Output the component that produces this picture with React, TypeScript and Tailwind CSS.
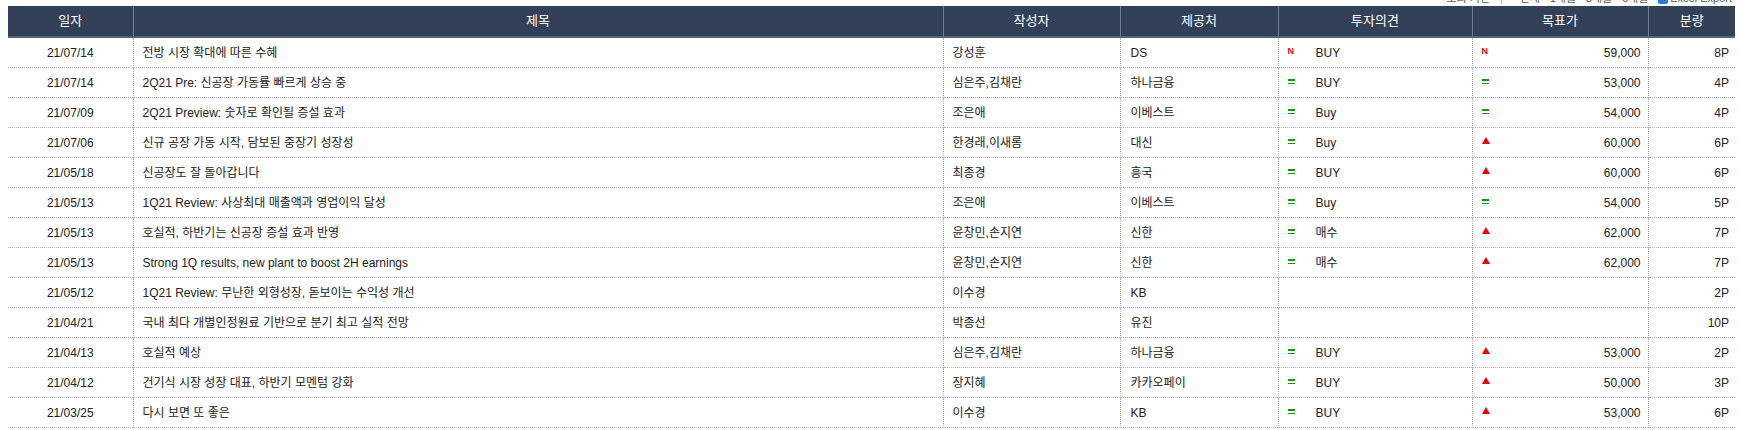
import * as React from "react";

type Mark = "N" | "=" | "up" | null;

interface Report {
  date: string;
  title: string;
  author: string;
  firm: string;
  opinionMark: Mark;
  opinion: string;
  priceMark: Mark;
  price: string;
  pages: string;
}

const reports: Report[] = [
  { date: "21/07/14", title: "전방 시장 확대에 따른 수혜", author: "강성훈", firm: "DS", opinionMark: "N", opinion: "BUY", priceMark: "N", price: "59,000", pages: "8P" },
  { date: "21/07/14", title: "2Q21 Pre: 신공장 가동률 빠르게 상승 중", author: "심은주,김채란", firm: "하나금융", opinionMark: "=", opinion: "BUY", priceMark: "=", price: "53,000", pages: "4P" },
  { date: "21/07/09", title: "2Q21 Preview: 숫자로 확인될 증설 효과", author: "조은애", firm: "이베스트", opinionMark: "=", opinion: "Buy", priceMark: "=", price: "54,000", pages: "4P" },
  { date: "21/07/06", title: "신규 공장 가동 시작, 담보된 중장기 성장성", author: "한경래,이새롬", firm: "대신", opinionMark: "=", opinion: "Buy", priceMark: "up", price: "60,000", pages: "6P" },
  { date: "21/05/18", title: "신공장도 잘 돌아갑니다", author: "최종경", firm: "흥국", opinionMark: "=", opinion: "BUY", priceMark: "up", price: "60,000", pages: "6P" },
  { date: "21/05/13", title: "1Q21 Review: 사상최대 매출액과 영업이익 달성", author: "조은애", firm: "이베스트", opinionMark: "=", opinion: "Buy", priceMark: "=", price: "54,000", pages: "5P" },
  { date: "21/05/13", title: "호실적, 하반기는 신공장 증설 효과 반영", author: "윤창민,손지연", firm: "신한", opinionMark: "=", opinion: "매수", priceMark: "up", price: "62,000", pages: "7P" },
  { date: "21/05/13", title: "Strong 1Q results, new plant to boost 2H earnings", author: "윤창민,손지연", firm: "신한", opinionMark: "=", opinion: "매수", priceMark: "up", price: "62,000", pages: "7P" },
  { date: "21/05/12", title: "1Q21 Review: 무난한 외형성장, 돋보이는 수익성 개선", author: "이수경", firm: "KB", opinionMark: null, opinion: "", priceMark: null, price: "", pages: "2P" },
  { date: "21/04/21", title: "국내 최다 개별인정원료 기반으로 분기 최고 실적 전망", author: "박종선", firm: "유진", opinionMark: null, opinion: "", priceMark: null, price: "", pages: "10P" },
  { date: "21/04/13", title: "호실적 예상", author: "심은주,김채란", firm: "하나금융", opinionMark: "=", opinion: "BUY", priceMark: "up", price: "53,000", pages: "2P" },
  { date: "21/04/12", title: "건기식 시장 성장 대표, 하반기 모멘텀 강화", author: "장지혜", firm: "카카오페이", opinionMark: "=", opinion: "BUY", priceMark: "up", price: "50,000", pages: "3P" },
  { date: "21/03/25", title: "다시 보면 또 좋은", author: "이수경", firm: "KB", opinionMark: "=", opinion: "BUY", priceMark: "up", price: "53,000", pages: "6P" },
];

const columns = [
  { label: "일자", w: "w-[125px]" },
  { label: "제목", w: "w-[810px]" },
  { label: "작성자", w: "w-[177px]" },
  { label: "제공처", w: "w-[158px]" },
  { label: "투자의견", w: "w-[194px]" },
  { label: "목표가", w: "w-[176px]" },
  { label: "분량", w: "w-[87px]" },
];

// small change markers: new / unchanged / raised
function MarkIcon({ mark }: { mark: Mark }) {
  if (mark === "N") {
    return (
      <span className="block w-[8px] text-[9px] leading-[9px] font-black text-[#ff0000] [font-family:'Liberation_Sans',Arial,sans-serif]">
        N
      </span>
    );
  }
  if (mark === "=") {
    return (
      <span className="flex w-[8px] flex-col gap-[2px] pt-[2px]">
        <span className="block h-[1.5px] w-[7px] bg-[#119911]" />
        <span className="block h-[1.5px] w-[7px] bg-[#119911]" />
      </span>
    );
  }
  if (mark === "up") {
    return (
      <svg width="8" height="7" viewBox="0 0 8 7" className="block">
        <polygon points="4,0 8,7 0,7" fill="#ee0000" />
      </svg>
    );
  }
  return null;
}

export default function App() {
  return (
    <div className="w-[1740px] h-[430px] overflow-hidden bg-white text-[12px] text-[#222] [font-family:'Liberation_Sans','Noto_Sans_CJK_KR',sans-serif]">
      {/* clipped toolbar above the table */}
      <div className="h-[6px] overflow-hidden flex justify-end pr-[8px]">
        <div className="-mt-[9px] flex items-center gap-[10px] text-[11px] text-[#555]">
          <span>―</span>
          <span>조회 기간</span>
          <span className="text-[#aaa]">|</span>
          <span>· 전체 · 1개월 · 3개월 · 6개월</span>
          <span className="flex items-center gap-[2px]">
            <span className="block w-[10px] h-[10px] rounded-[2px] bg-[#2b7bd6]" />
            <span>Excel Export</span>
          </span>
        </div>
      </div>

      <table className="ml-[8px] w-[1727px] table-fixed border-collapse">
        <colgroup>
          {columns.map((c) => (
            <col key={c.label} className={c.w} />
          ))}
        </colgroup>
        <thead>
          <tr className="h-[31px] bg-[#334158] border-b-2 border-[#56647b]">
            {columns.map((c, i) => (
              <th
                key={c.label}
                className={`p-0 text-center text-[13px] font-normal text-white ${
                  i > 0 ? "border-l border-[#737d8f]" : ""
                }`}
              >
                {c.label}
              </th>
            ))}
          </tr>
        </thead>
        <tbody>
          {reports.map((r, idx) => (
            <tr key={idx} className="h-[30px] border-b border-dotted border-[#b4b4b4]">
              <td className="p-0 text-center">{r.date}</td>
              <td className="border-l border-dotted border-[#b4b4b4] pl-[9px] truncate">{r.title}</td>
              <td className="border-l border-dotted border-[#b4b4b4] pl-[9px]">{r.author}</td>
              <td className="border-l border-dotted border-[#b4b4b4] pl-[10px]">{r.firm}</td>
              <td className="border-l border-dotted border-[#b4b4b4] p-0">
                <div className="relative h-[29px] flex items-center pl-[37px]">
                  <span className="absolute left-[9px] top-[9px]">
                    <MarkIcon mark={r.opinionMark} />
                  </span>
                  {r.opinion}
                </div>
              </td>
              <td className="border-l border-dotted border-[#b4b4b4] p-0">
                <div className="relative h-[29px] flex items-center justify-end pr-[7px]">
                  <span className="absolute left-[9px] top-[9px]">
                    <MarkIcon mark={r.priceMark} />
                  </span>
                  {r.price}
                </div>
              </td>
              <td className="border-l border-dotted border-[#b4b4b4] pr-[6px] text-right">{r.pages}</td>
            </tr>
          ))}
        </tbody>
      </table>
    </div>
  );
}
